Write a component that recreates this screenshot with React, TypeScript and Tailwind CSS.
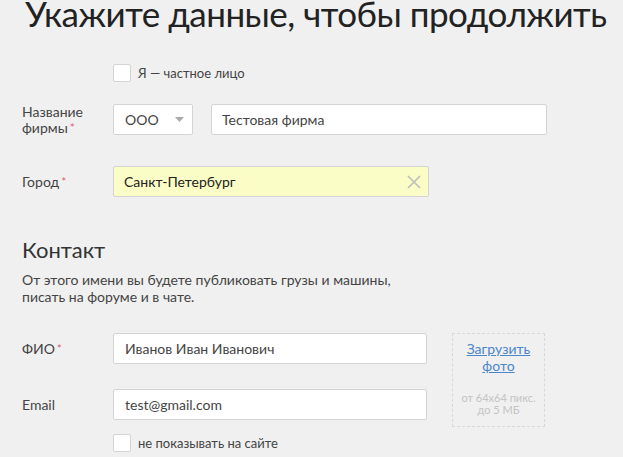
import { useState } from "react";

function Checkbox({ label, checked, onChange }: { label: string; checked: boolean; onChange: () => void }) {
  return (
    <label className="flex items-center gap-[7px] cursor-pointer select-none">
      <span
        onClick={onChange}
        className="w-[18px] h-[18px] bg-white border border-[#d4d4d4] rounded-[2px] flex items-center justify-center"
      >
        {checked && <span className="w-[8px] h-[8px] bg-[#555]" />}
      </span>
      <span className="text-[13px] leading-[18px] text-[#444]">{label}</span>
    </label>
  );
}

function Required() {
  return <span className="text-[#e0607e] text-[12px] align-top ml-[2px]">*</span>;
}

export default function App() {
  const [isPrivate, setIsPrivate] = useState(false);
  const [hideEmail, setHideEmail] = useState(false);
  const [city, setCity] = useState("Санкт-Петербург");

  return (
    <div
      className="min-h-screen bg-[#f0f0f0] pl-[22px] overflow-hidden text-[#444]"
      style={{ fontFamily: "Lato, 'Open Sans', sans-serif" }}
    >
      {/* Title */}
      <h1 className="mt-[-5px] text-[35px] leading-[36px] tracking-[-0.5px] text-[#222] whitespace-nowrap pl-[3px]">
        Укажите данные, чтобы продолжить
      </h1>

      {/* Private person */}
      <div className="mt-[33px] ml-[91px]">
        <Checkbox label="Я — частное лицо" checked={isPrivate} onChange={() => setIsPrivate((v) => !v)} />
      </div>

      {/* Firm name */}
      <div className="mt-[22px] flex items-center h-[31px]">
        <div className="w-[91px] text-[14px] leading-[16px]">
          Название
          <br />
          фирмы
          <Required />
        </div>
        <div className="w-[80px] h-[31px] bg-white border border-[#d4d4d4] rounded-[2px] flex items-center justify-between pl-[11px] pr-[8px] text-[14px]">
          <span>ООО</span>
          <svg width="9" height="5" viewBox="0 0 9 5">
            <path d="M0 0h9L4.5 5z" fill="#aaa" />
          </svg>
        </div>
        <input
          defaultValue="Тестовая фирма"
          className="ml-[18px] w-[336px] h-[31px] bg-white border border-[#d4d4d4] rounded-[2px] px-[10px] text-[14px] text-[#444] outline-none"
        />
      </div>

      {/* City */}
      <div className="mt-[31px] flex items-center h-[31px]">
        <div className="w-[91px] text-[14px] leading-[17px]">
          Город
          <Required />
        </div>
        <div className="w-[316px] h-[31px] bg-[#fbfdc6] border border-[#d4d4d4] rounded-[2px] flex items-center pl-[10px] pr-[7px]">
          <input
            value={city}
            onChange={(e) => setCity(e.target.value)}
            className="flex-1 min-w-0 bg-transparent text-[14px] text-[#222] outline-none"
          />
          <button onClick={() => setCity("")} className="w-[14px] h-[14px] flex items-center justify-center">
            <svg width="14" height="14" viewBox="0 0 14 14">
              <path d="M1 1l12 12M13 1L1 13" stroke="#bdbdbd" strokeWidth="1.6" />
            </svg>
          </button>
        </div>
      </div>

      {/* Contact */}
      <h2 className="mt-[40px] text-[22px] leading-[26px] text-[#333]">Контакт</h2>
      <p className="mt-[8px] text-[14px] leading-[17px]">
        От этого имени вы будете публиковать грузы и машины,
        <br />
        писать на форуме и в чате.
      </p>

      <div className="mt-[28px] flex items-start">
        <div className="w-[405px]">
          <div className="flex items-center h-[31px]">
            <div className="w-[91px] text-[14px] leading-[17px]">
              ФИО
              <Required />
            </div>
            <input
              defaultValue="Иванов Иван Иванович"
              className="w-[314px] h-[31px] bg-white border border-[#d4d4d4] rounded-[2px] px-[11px] text-[14px] text-[#444] outline-none"
            />
          </div>
          <div className="mt-[25px] flex items-center h-[31px]">
            <div className="w-[91px] text-[14px] leading-[17px]">Email</div>
            <input
              defaultValue="test@gmail.com"
              className="w-[314px] h-[31px] bg-white border border-[#d4d4d4] rounded-[2px] px-[11px] text-[14px] text-[#444] outline-none"
            />
          </div>
          <div className="mt-[14px] ml-[91px]">
            <Checkbox label="не показывать на сайте" checked={hideEmail} onChange={() => setHideEmail((v) => !v)} />
          </div>
        </div>

        <div className="ml-[25px] w-[93px] h-[94px] border border-dashed border-[#d8d8d8] flex flex-col items-center pt-[6px] text-center">
          <a href="#" className="text-[14px] leading-[17px] text-[#4a86c8] underline">
            Загрузить
            <br />
            фото
          </a>
          <div className="mt-[18px] text-[11px] leading-[12px] text-[#c4c4c4]">
            от 64x64 пикс.
            <br />
            до 5 МБ
          </div>
        </div>
      </div>
    </div>
  );
}
